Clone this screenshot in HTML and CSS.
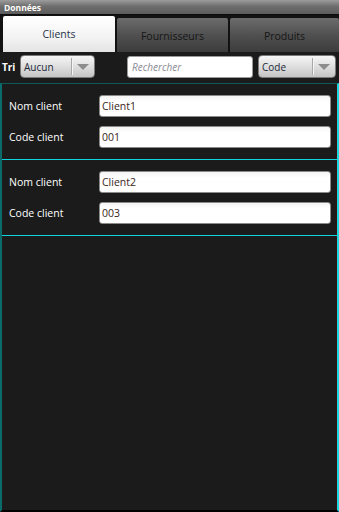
FILE: index.html
```html
<!DOCTYPE html>
<html>
<head>
<meta charset="utf-8">
<link rel="stylesheet" href="styles.css">
</head>
<body>
<div class="screen">
  <div class="titlebar">Données</div>
  <div class="tabs">
    <div class="tab active">Clients</div>
    <div class="tab">Fournisseurs</div>
    <div class="tab last">Produits</div>
  </div>
  <div class="toolbar">
    <span class="tri">Tri</span>
    <div class="spinner sort"><span class="sp-text">Aucun</span><span class="sp-sep"></span><span class="sp-arrow"></span></div>
    <div class="search">Rechercher</div>
    <div class="spinner code"><span class="sp-text">Code</span><span class="sp-sep"></span><span class="sp-arrow"></span></div>
  </div>
  <div class="panel">
    <div class="item">
      <div class="row"><span class="label">Nom client</span><div class="field">Client1</div></div>
      <div class="row"><span class="label">Code client</span><div class="field">001</div></div>
    </div>
    <div class="divider"></div>
    <div class="item">
      <div class="row"><span class="label">Nom client</span><div class="field">Client2</div></div>
      <div class="row"><span class="label">Code client</span><div class="field">003</div></div>
    </div>
    <div class="divider"></div>
  </div>
</div>
</body>
</html>
```
FILE: styles.css
```css
html, body {
  margin: 0;
  padding: 0;
  background: #000;
}
.screen {
  width: 339px;
  height: 512px;
  display: flex;
  flex-direction: column;
  font-family: "Open Sans", "DejaVu Sans", sans-serif;
  background: #1b1b1b;
  overflow: hidden;
}
.titlebar {
  height: 15px;
  flex: none;
  background: linear-gradient(#9c9c9c, #6e6e6e 45%, #5c5c5c);
  color: #fff;
  font-weight: bold;
  font-size: 8.5px;
  line-height: 15px;
  padding-left: 4px;
  border-bottom: 1px solid #0c0c0c;
  box-sizing: border-box;
}
.tabs {
  height: 37px;
  flex: none;
  display: flex;
  background: #121212;
  padding: 1px 0 0 3px;
  gap: 2px;
  box-sizing: border-box;
}
.tab {
  width: 111px;
  margin-top: 2px;
  background: linear-gradient(#6c6c6c, #505050 50%, #3c3c3c);
  color: #161616;
  font-size: 10.5px;
  display: flex;
  align-items: center;
  justify-content: center;
  padding-top: 1px;
  border-radius: 2px 2px 0 0;
}
.tab.active {
  width: 112px;
  margin-top: 0;
  background: linear-gradient(#ffffff, #f3f3f3 60%, #e4e4e4);
  color: #1f3446;
  padding-top: 0;
}
.tab.last {
  flex: 1;
}
.toolbar {
  height: 31px;
  flex: none;
  display: flex;
  align-items: center;
  background: #1b1b1b;
  box-sizing: border-box;
  padding-left: 2px;
  padding-bottom: 2px;
}
.tri {
  color: #fff;
  font-weight: bold;
  font-size: 10px;
  width: 18px;
}
.spinner {
  height: 23px;
  box-sizing: border-box;
  border: 1px solid #7a7a7a;
  border-radius: 4px;
  background: linear-gradient(#f6f6f6, #dcdcdc 55%, #c4c4c4);
  display: flex;
  align-items: center;
  position: relative;
}
.spinner.sort {
  width: 75px;
}
.spinner.code {
  width: 78px;
  margin-left: 5px;
}
.sp-text {
  flex: 1;
  color: #1a2838;
  font-size: 10px;
  padding-left: 3px;
}
.sp-sep {
  width: 1px;
  height: 17px;
  background: #a8a8a8;
  box-shadow: 1px 0 0 #f4f4f4;
}
.sp-arrow {
  width: 22px;
  height: 100%;
  display: flex;
  align-items: center;
  justify-content: center;
}
.sp-arrow::after {
  content: "";
  border-left: 6px solid transparent;
  border-right: 6px solid transparent;
  border-top: 6px solid #8c8c8c;
}
.search {
  width: 126px;
  height: 22px;
  margin-left: 32px;
  box-sizing: border-box;
  background: #fff;
  border: 1px solid #9a9a9a;
  border-radius: 3px;
  color: #8a8a94;
  font-style: italic;
  font-size: 10px;
  line-height: 20px;
  padding-left: 4px;
}
.panel {
  flex: 1;
  border-top: 1px solid #0d5a5a;
  border-left: 2px solid #0b6b6b;
  border-right: 2px solid #1ad8e0;
  border-bottom: 2px solid #000;
  box-shadow: inset -1px 0 0 #3a1010;
  background: #1b1b1b;
}
.item {
  padding: 11px 6px 11px 7px;
  display: flex;
  flex-direction: column;
  gap: 9px;
}
.item:last-of-type {
  padding-bottom: 12px;
}
.divider {
  height: 1px;
  background: #12d4e0;
}
.row {
  display: flex;
  align-items: center;
  height: 22px;
}
.label {
  width: 90px;
  color: #fff;
  font-size: 10.5px;
}
.field {
  flex: 1;
  height: 22px;
  box-sizing: border-box;
  background: linear-gradient(#f4f4f4, #ffffff 30%);
  border: 1px solid #8a8a8a;
  border-radius: 3px;
  color: #3a2418;
  font-size: 10.5px;
  line-height: 20px;
  padding-left: 2px;
}
```
